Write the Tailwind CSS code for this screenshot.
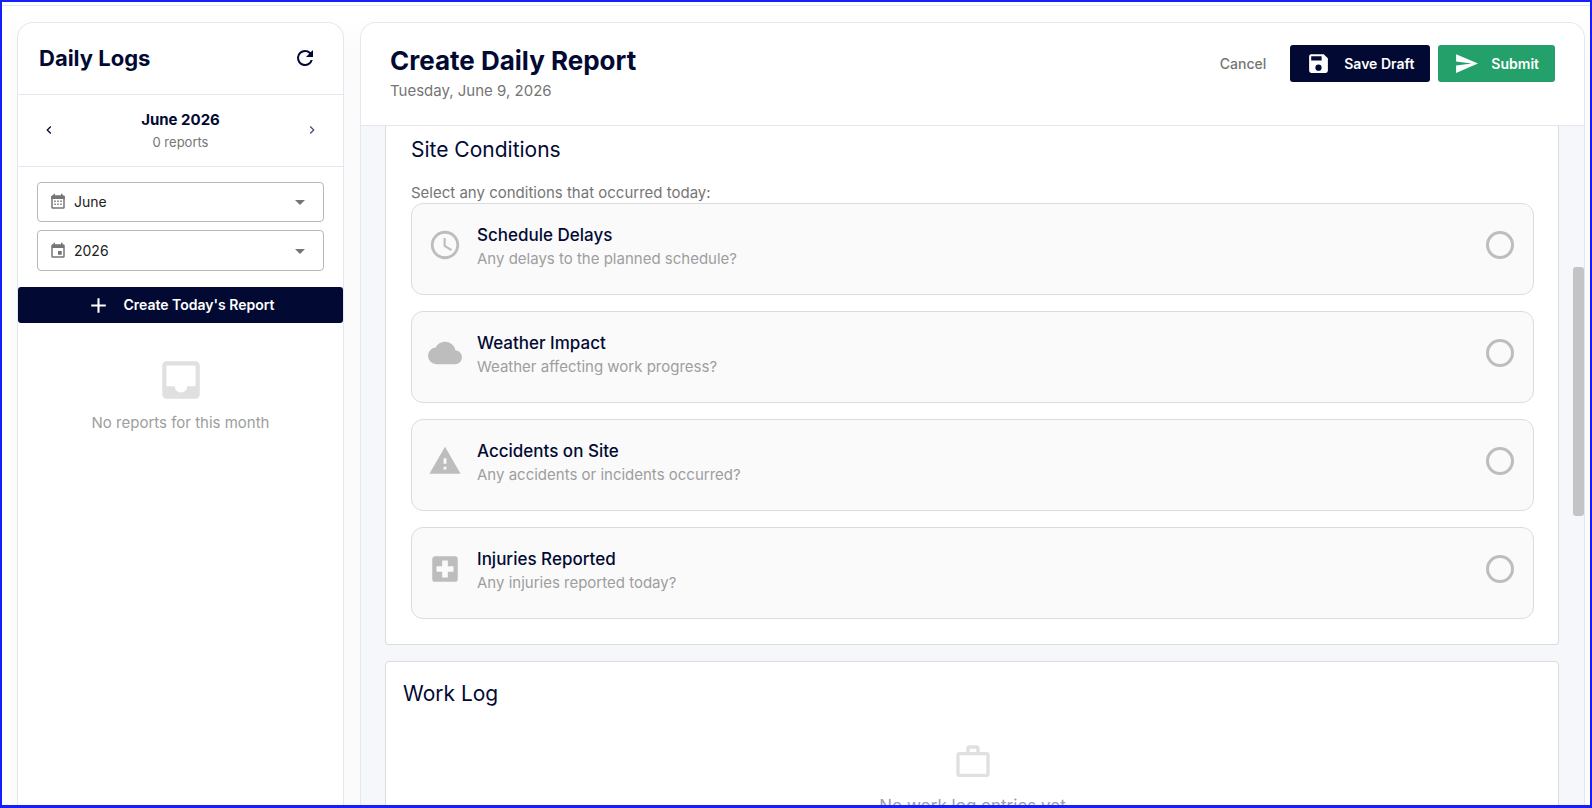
<!DOCTYPE html>
<html lang="en">
<head>
<meta charset="utf-8">
<title>Daily Logs</title>
<script src="https://cdn.jsdelivr.net/npm/@tailwindcss/browser@4"></script>
</head>
<body class="bg-white font-['Inter',sans-serif] text-sm text-[#020a33]">
<div class="flex h-screen flex-col overflow-hidden border-x-2 border-t-2 border-b-3 border-[#141eff]">
  <div class="h-1 shrink-0 border-b border-[#e2e8f0]"></div>
  <div class="flex min-h-0 flex-1 gap-4 pt-4 pr-[5px] pl-[15px]">

    <aside class="flex w-[327px] shrink-0 flex-col rounded-t-2xl border border-b-0 border-[#e2e8f0] bg-white shadow-[0_8px_24px_rgba(0,0,0,0.04)]">
      <div class="flex h-[72px] shrink-0 items-center justify-between border-b border-[#e2e8f0] pr-[26px] pb-[2px] pl-[21px]">
        <h2 class="text-[22px] leading-8 font-bold">Daily Logs</h2>
        <button type="button" aria-label="Refresh"><svg class="size-6" viewBox="0 0 24 24" fill="currentColor"><path d="M17.65 6.35A7.96 7.96 0 0 0 12 4a8 8 0 1 0 7.73 10h-2.08A6 6 0 1 1 12 6c1.66 0 3.14.69 4.22 1.78L13 11h7V4z"/></svg></button>
      </div>
      <div class="flex h-[72px] shrink-0 items-center justify-between border-b border-[#e2e8f0] px-[17px] pb-[2px]">
        <button type="button" aria-label="Previous month" class="flex size-7 items-center justify-center"><svg class="size-4" viewBox="0 0 24 24" fill="currentColor"><path d="M15.41 16.58 10.83 12l4.58-4.59L14 6l-6 6 6 6z"/></svg></button>
        <div class="text-center">
          <div class="text-[15px] leading-6 font-bold">June 2026</div>
          <div class="text-[13px] leading-5 text-[#757575]">0 reports</div>
        </div>
        <button type="button" aria-label="Next month" class="flex size-7 items-center justify-center opacity-70"><svg class="size-4" viewBox="0 0 24 24" fill="currentColor"><path d="M8.59 16.58 13.17 12 8.59 7.41 10 6l6 6-6 6z"/></svg></button>
      </div>
      <div class="flex flex-col gap-2 px-[19px] pt-[15px] pb-4">
        <div class="relative">
          <svg class="pointer-events-none absolute top-[11px] left-3 size-[18px] text-[#757575]" viewBox="0 0 24 24" fill="currentColor"><path d="M9 10v2H7v-2h2m4 0v2h-2v-2h2m4 0v2h-2v-2h2m2-7a2 2 0 0 1 2 2v14a2 2 0 0 1-2 2H5a2 2 0 0 1-2-2V5c0-1.1.9-2 2-2h1V1h2v2h8V1h2v2h1m0 16V8H5v11h14M9 14v2H7v-2h2m4 0v2h-2v-2h2m4 0v2h-2v-2h2z"/><path d="M3 4h18v4H3z"/></svg>
          <select aria-label="Month" class="h-10 w-full appearance-none rounded border border-[#b8b8b8] bg-transparent pl-9 text-[#212121]"><option>June</option></select>
          <svg class="pointer-events-none absolute top-2 right-3 size-6 text-[#757575]" viewBox="0 0 24 24" fill="currentColor"><path d="m7 10 5 5 5-5z"/></svg>
        </div>
        <div class="relative">
          <svg class="pointer-events-none absolute top-3 left-3 size-[18px] text-[#757575]" viewBox="0 0 24 24" fill="currentColor"><path d="M19 19H5V8h14m-3-7v2H8V1H6v2H5c-1.11 0-2 .89-2 2v14a2 2 0 0 0 2 2h14a2 2 0 0 0 2-2V5a2 2 0 0 0-2-2h-1V1m-1 11h-5v5h5z"/></svg>
          <select aria-label="Year" class="h-[41px] w-full appearance-none rounded border border-[#b8b8b8] bg-transparent pl-9 text-[#212121]"><option>2026</option></select>
          <svg class="pointer-events-none absolute top-[9px] right-3 size-6 text-[#757575]" viewBox="0 0 24 24" fill="currentColor"><path d="m7 10 5 5 5-5z"/></svg>
        </div>
      </div>
      <button type="button" class="flex h-9 shrink-0 items-center justify-center gap-3 rounded-[3px] bg-[#020a33] font-semibold text-white">
        <svg class="size-[25px]" viewBox="0 0 24 24" fill="currentColor"><path d="M19 13h-6v6h-2v-6H5v-2h6V5h2v6h6z"/></svg>
        Create Today's Report
      </button>
      <div class="flex flex-col items-center gap-2 pt-8 text-[#9e9e9e]">
        <svg class="size-[50px] text-[#e0e0e0]" viewBox="0 0 24 24" fill="currentColor"><path d="M19 15h-4a3 3 0 0 1-6 0H5V5h14m0-2H5c-1.11 0-2 .9-2 2v14a2 2 0 0 0 2 2h14a2 2 0 0 0 2-2V5a2 2 0 0 0-2-2z"/></svg>
        <p class="text-[15px] leading-5">No reports for this month</p>
      </div>
    </aside>

    <main class="relative flex min-w-0 flex-1 flex-col overflow-hidden rounded-t-2xl border border-b-0 border-[#e2e8f0] bg-[#f5f7fb] shadow-[0_8px_24px_rgba(0,0,0,0.04)]">
      <header class="flex shrink-0 items-start justify-between border-b border-[#e2e8f0] bg-white px-[29px] pt-[22px] pb-6">
        <div>
          <h1 class="text-[26px] leading-8 font-bold">Create Daily Report</h1>
          <p class="mt-1 text-[15px] leading-5 text-[#757575]">Tuesday, June 9, 2026</p>
        </div>
        <div class="flex gap-2 font-semibold text-white">
          <button type="button" class="h-[37px] px-4 font-medium text-[#757575]">Cancel</button>
          <button type="button" class="flex h-[37px] items-center gap-[13px] rounded-[3px] bg-[#020a33] px-4"><svg class="size-[25px]" viewBox="0 0 24 24" fill="currentColor"><path d="M15 9H5V5h10m-3 14a3 3 0 0 1-3-3 3 3 0 0 1 3-3 3 3 0 0 1 3 3 3 3 0 0 1-3 3m5-16H5a2 2 0 0 0-2 2v14a2 2 0 0 0 2 2h14a2 2 0 0 0 2-2V7z"/></svg>Save Draft</button>
          <button type="button" class="flex h-[37px] items-center gap-3 rounded-[3px] bg-[#24a06b] px-4"><svg class="size-[25px]" viewBox="0 0 24 24" fill="currentColor"><path d="m2 21 21-9L2 3v7l15 2-15 2z"/></svg>Submit</button>
        </div>
      </header>

      <div class="flex min-h-0 flex-1 flex-col gap-4 overflow-hidden pr-[25px] pl-6">
        <section class="shrink-0 rounded-b border border-t-0 border-[#dcdcdc] bg-white pt-2 pr-6 pb-[25px] pl-[25px]">
          <h2 class="text-[21px] leading-8">Site Conditions</h2>
          <p class="mt-[17px] text-[15px] leading-5 text-[#757575]">Select any conditions that occurred today:</p>
          <div class="flex flex-col gap-4">
            <label class="flex h-[92px] items-start gap-[15px] rounded-xl border border-[#dcdcdc] bg-[#fafafa] px-4 pt-[19px]">
              <svg class="mt-[5px] size-[34px] text-[#bdbdbd]" viewBox="0 0 24 24" fill="currentColor"><path d="M12 20a8 8 0 1 0 0-16 8 8 0 0 0 0 16m0-18a10 10 0 1 1 0 20 10 10 0 0 1 0-20m.5 5v5.25l4.5 2.67-.75 1.23L11 13V7z"/></svg>
              <span class="flex-1"><span class="block text-[17px] leading-6 font-medium">Schedule Delays</span><span class="block text-[15px] leading-6 text-[#9e9e9e]">Any delays to the planned schedule?</span></span>
              <input type="checkbox" class="mt-2 mr-[3px] size-7 appearance-none rounded-full border-3 border-[#bdbdbd]">
            </label>
            <label class="flex h-[92px] items-start gap-[15px] rounded-xl border border-[#dcdcdc] bg-[#fafafa] px-4 pt-[19px]">
              <svg class="mt-[5px] size-[34px] text-[#bdbdbd]" viewBox="0 0 24 24" fill="currentColor"><path d="M19.35 10.03A7.49 7.49 0 0 0 12 4C9.11 4 6.6 5.64 5.35 8.03A6.004 6.004 0 0 0 0 14a6 6 0 0 0 6 6h13a5 5 0 0 0 5-5c0-2.64-2.05-4.78-4.65-4.97z"/></svg>
              <span class="flex-1"><span class="block text-[17px] leading-6 font-medium">Weather Impact</span><span class="block text-[15px] leading-6 text-[#9e9e9e]">Weather affecting work progress?</span></span>
              <input type="checkbox" class="mt-2 mr-[3px] size-7 appearance-none rounded-full border-3 border-[#bdbdbd]">
            </label>
            <label class="flex h-[92px] items-start gap-[15px] rounded-xl border border-[#dcdcdc] bg-[#fafafa] px-4 pt-[19px]">
              <svg class="mt-[5px] size-[34px] text-[#bdbdbd]" viewBox="0 0 24 24" fill="currentColor"><path d="M13 14h-2v-4h2m0 8h-2v-2h2M1 21h22L12 2z"/></svg>
              <span class="flex-1"><span class="block text-[17px] leading-6 font-medium">Accidents on Site</span><span class="block text-[15px] leading-6 text-[#9e9e9e]">Any accidents or incidents occurred?</span></span>
              <input type="checkbox" class="mt-2 mr-[3px] size-7 appearance-none rounded-full border-3 border-[#bdbdbd]">
            </label>
            <label class="flex h-[92px] items-start gap-[15px] rounded-xl border border-[#dcdcdc] bg-[#fafafa] px-4 pt-[19px]">
              <svg class="mt-[5px] size-[34px] text-[#bdbdbd]" viewBox="0 0 24 24" fill="currentColor"><path d="M18 14h-4v4h-4v-4H6v-4h4V6h4v4h4m1-7H5c-1.1 0-2 .9-2 2v14a2 2 0 0 0 2 2h14a2 2 0 0 0 2-2V5a2 2 0 0 0-2-2z"/></svg>
              <span class="flex-1"><span class="block text-[17px] leading-6 font-medium">Injuries Reported</span><span class="block text-[15px] leading-6 text-[#9e9e9e]">Any injuries reported today?</span></span>
              <input type="checkbox" class="mt-2 mr-[3px] size-7 appearance-none rounded-full border-3 border-[#bdbdbd]">
            </label>
          </div>
        </section>

        <section class="shrink-0 rounded border border-[#dcdcdc] bg-white py-4 pr-4 pl-[17px]">
          <h2 class="text-[21px] leading-8">Work Log</h2>
          <div class="flex flex-col items-center gap-3 pt-8 pb-6 text-[#9e9e9e]">
            <svg class="size-10 text-[#e0e0e0]" viewBox="0 0 24 24" fill="currentColor"><path d="M20 6h-4V4a2 2 0 0 0-2-2h-4a2 2 0 0 0-2 2v2H4a2 2 0 0 0-2 2v11a2 2 0 0 0 2 2h16a2 2 0 0 0 2-2V8a2 2 0 0 0-2-2M10 4h4v2h-4zm10 15H4V8h16z"/></svg>
            <p class="text-[17px] leading-6">No work log entries yet</p>
          </div>
        </section>
      </div>
      <div class="absolute top-[244px] right-0 h-[249px] w-[11px] rounded-[3px] bg-[#c3c4c6]"></div>
    </main>
  </div>
</div>
</body>
</html>
